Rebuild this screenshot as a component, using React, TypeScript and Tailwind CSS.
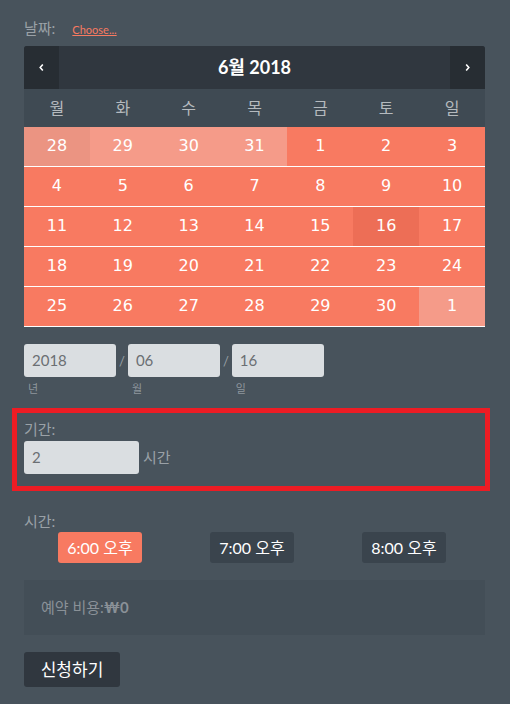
const weekdays = ["월", "화", "수", "목", "금", "토", "일"];

type Day = { n: number; tone: "muted" | "mutedDark" | "normal" | "selected" };

const weeks: Day[][] = [
  [
    { n: 28, tone: "mutedDark" },
    { n: 29, tone: "muted" },
    { n: 30, tone: "muted" },
    { n: 31, tone: "muted" },
    { n: 1, tone: "normal" },
    { n: 2, tone: "normal" },
    { n: 3, tone: "normal" },
  ],
  [4, 5, 6, 7, 8, 9, 10].map((n) => ({ n, tone: "normal" as const })),
  [11, 12, 13, 14, 15, 16, 17].map((n) => ({ n, tone: n === 16 ? ("selected" as const) : ("normal" as const) })),
  [18, 19, 20, 21, 22, 23, 24].map((n) => ({ n, tone: "normal" as const })),
  [
    ...[25, 26, 27, 28, 29, 30].map((n) => ({ n, tone: "normal" as const })),
    { n: 1, tone: "muted" as const },
  ],
];

const toneClass = {
  muted: "bg-[#f59b89]",
  mutedDark: "bg-[#eb9482]",
  normal: "bg-[#f87a61]",
  selected: "bg-[#ed6e56]",
};

function Chevron({ dir }: { dir: "left" | "right" }) {
  return (
    <svg viewBox="0 0 8 10" className="h-[9px] w-[7px]" aria-hidden="true">
      <path
        d={dir === "left" ? "M5.5 1.5 2.5 5l3 3.5" : "M2.5 1.5 5.5 5l-3 3.5"}
        stroke="white"
        strokeWidth="1.8"
        fill="none"
      />
    </svg>
  );
}

export default function App() {
  return (
    <div className="min-h-[704px] w-[510px] bg-[#48535c] px-6 pt-[17px] font-['Lato','Noto_Sans_CJK_KR',sans-serif] text-[15px]">
      <div className="flex items-baseline gap-[17px]">
        <span className="text-[15px] text-[#9aa1a7]">날짜:</span>
        <a href="#" className="text-[11px] text-[#f87a61] underline">
          Choose...
        </a>
      </div>

      <div className="mt-[6px] w-[461px] overflow-hidden rounded-t-[3px]">
        <div className="flex h-[43px] items-center bg-[#30373f]">
          <button className="flex h-full w-[35px] items-center justify-center bg-[#272d33]">
            <Chevron dir="left" />
          </button>
          <div className="flex-1 text-center text-[18px] font-bold text-white">6월 2018</div>
          <button className="flex h-full w-[35px] items-center justify-center bg-[#272d33]">
            <Chevron dir="right" />
          </button>
        </div>
        <div className="grid h-[38px] grid-cols-7 items-center bg-[#3f4a53]">
          {weekdays.map((w) => (
            <div key={w} className="text-center text-[16px] text-[#b5babe]">
              {w}
            </div>
          ))}
        </div>
        {weeks.map((week, i) => (
          <div key={i} className="grid grid-cols-7 border-b border-white">
            {week.map((d, j) => (
              <div
                key={j}
                className={`flex h-[39px] items-center justify-center font-['DejaVu_Sans',sans-serif] text-[16px] text-white ${toneClass[d.tone]}`}
              >
                {d.n}
              </div>
            ))}
          </div>
        ))}
      </div>

      <div className="mt-[17px] flex items-start">
        {[
          { v: "2018", l: "년" },
          { v: "06", l: "월" },
          { v: "16", l: "일" },
        ].map((f, i) => (
          <div key={f.l} className="flex items-start">
            {i > 0 && <span className="mx-[3px] mt-[8px] text-[13px] text-[#9aa1a7]">/</span>}
            <div className="flex flex-col">
              <div className="flex h-[33px] w-[92px] items-center rounded-[3px] bg-[#dadee1] px-2 text-[15px] text-[#6b6f73]">
                {f.v}
              </div>
              <span className="mt-[4px] pl-1 text-[11px] text-[#8e969c]">{f.l}</span>
            </div>
          </div>
        ))}
      </div>

      <div className="-mx-3 mt-[11px] h-[83px] w-[478px] border-[5px] border-[#ed1c24] px-[7px] pt-[6px]">
        <div className="text-[15px] leading-[20px] text-[#9aa1a7]">기간:</div>
        <div className="mt-[2px] flex items-center gap-1">
          <div className="flex h-[33px] w-[115px] items-center rounded-[3px] bg-[#dadee1] px-2 text-[15px] text-[#6b6f73]">
            2
          </div>
          <span className="text-[15px] text-[#9aa1a7]">시간</span>
        </div>
      </div>

      <div className="mt-[20px] text-[15px] leading-[20px] text-[#9aa1a7]">시간:</div>
      <div className="mt-[1px] flex gap-[68px] pl-[34px]">
        <button className="h-[31px] w-[84px] rounded-[3px] bg-[#f87a61] text-[16px] text-white">6:00 오후</button>
        <button className="h-[31px] w-[84px] rounded-[3px] bg-[#3a444d] text-[16px] text-white">7:00 오후</button>
        <button className="h-[31px] w-[84px] rounded-[3px] bg-[#3a444d] text-[16px] text-white">8:00 오후</button>
      </div>

      <div className="mt-[17px] flex h-[55px] w-[461px] items-center bg-[#434e57] px-[17px] text-[15px] text-[#8a9197]">
        예약 비용:<span className="font-bold">₩0</span>
      </div>

      <button className="mt-[17px] h-[35px] w-[96px] rounded-[3px] bg-[#30373f] text-[17px] text-white">
        신청하기
      </button>
    </div>
  );
}
